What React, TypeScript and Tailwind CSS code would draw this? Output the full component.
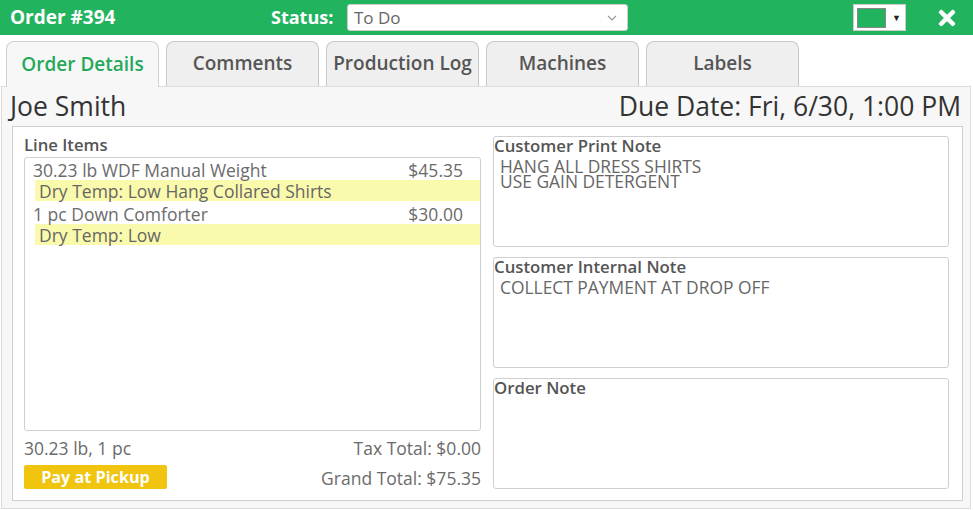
import React from "react";
import { FaTimes } from "react-icons/fa";

const tabs = ["Order Details", "Comments", "Production Log", "Machines", "Labels"];

function Note({ title, lines }: { title: string; lines: string[] }) {
  return (
    <div className="h-[111px] rounded-[3px] border border-[#cfcfcf] bg-white">
      <div className="text-[16.8px] font-semibold leading-[17px] text-[#555]">{title}</div>
      <div className="pl-[6px] pt-[5px] text-[17.4px] leading-[15px] text-[#666]">
        {lines.map((l) => (
          <div key={l}>{l}</div>
        ))}
      </div>
    </div>
  );
}

function Item({ name, price, note }: { name: string; price: string; note: string }) {
  return (
    <div className="mb-[3px]">
      <div className="flex h-[20px] items-center justify-between pl-[8px] pr-[17px] text-[17.5px] leading-[20px] text-[#6b6b6b]">
        <span>{name}</span>
        <span>{price}</span>
      </div>
      <div className="ml-[10px] flex h-[21px] items-center bg-[#fafaad] pl-[4px] text-[17.5px] leading-[20px] text-[#666]">{note}</div>
    </div>
  );
}

export default function App() {
  return (
    <div className="h-[510px] w-[973px] overflow-hidden bg-white" style={{ fontFamily: '"Open Sans", sans-serif' }}>
      {/* header */}
      <div className="flex h-[35px] items-center bg-[#22b35f] pl-[10px]">
        <div className="w-[261px] text-[19px] font-bold text-white">Order #394</div>
        <div className="w-[76px] text-[18px] font-bold text-white">Status:</div>
        <div className="flex h-[27px] w-[281px] items-center justify-between rounded-[3px] border border-[#ccc] bg-white pl-[6px] pr-[10px] text-[17px] text-[#666]">
          <span>To Do</span>
          <svg width="10" height="6" viewBox="0 0 10 6" fill="none">
            <path d="M1 1l4 4 4-4" stroke="#999" strokeWidth="1.2" />
          </svg>
        </div>
        <div className="ml-[225px] flex h-[27px] w-[53px] items-center border border-[#ccc] bg-white pl-[3px]">
          <div className="h-[20px] w-[29px] border border-[#888] bg-[#22b35f]" />
          <div className="ml-[6px] text-[9px] leading-none text-[#222]">▼</div>
        </div>
        <div className="ml-[29px] flex items-center text-white">
          <FaTimes size={24} />
        </div>
      </div>

      {/* tabs */}
      <div className="mt-[6px] flex h-[45px] gap-[7px] pl-[6px]">
        {tabs.map((t, i) => (
          <div
            key={t}
            className={
              i === 0
                ? "relative z-10 flex h-[46px] w-[153px] items-center justify-center rounded-t-[8px] border border-b-0 border-[#d0d0d0] bg-[#f7f7f7] pb-[1px] text-[19px] font-semibold text-[#25a85a]"
                : "flex h-[45px] w-[153px] items-center justify-center rounded-t-[8px] border border-b-0 border-[#c8c8c8] bg-[#efefef] pb-[1px] text-[19px] font-semibold text-[#555]"
            }
          >
            {t}
          </div>
        ))}
      </div>

      {/* panel */}
      <div className="ml-[1px] h-[423px] w-[970px] border border-[#dcdcdc] bg-[#f7f7f7]">
        <div className="flex h-[39px] items-center justify-between pl-[8px] pr-[9px] pt-[1px] text-[26.5px] text-[#333]">
          <span>Joe Smith</span>
          <span>Due Date: Fri, 6/30, 1:00 PM</span>
        </div>
        <div className="ml-[10px] h-[375px] w-[951px] border border-[#cfcfcf] bg-white">
          <div className="grid grid-cols-[457px_456px] gap-[12px] pb-[10px] pl-[11px] pt-[9px]">
            {/* left */}
            <div className="flex flex-col">
              <div className="h-[21px] text-[16.7px] font-semibold leading-[17px] text-[#555]">Line Items</div>
              <div className="h-[274px] rounded-[3px] border border-[#cfcfcf] bg-white pt-[2px]">
                <Item name="30.23 lb WDF Manual Weight" price="$45.35" note="Dry Temp: Low Hang Collared Shirts" />
                <Item name="1 pc Down Comforter" price="$30.00" note="Dry Temp: Low" />
              </div>
              <div className="mt-[7px] flex h-[20px] items-center justify-between text-[17.5px] leading-[20px] text-[#6b6b6b]">
                <span>30.23 lb, 1 pc</span>
                <span>Tax Total: $0.00</span>
              </div>
              <div className="mt-[7px] flex h-[24px] items-center justify-between">
                <div className="flex h-[24px] w-[143px] items-center justify-center rounded-[2px] bg-[#f1c40f] text-[16.2px] font-bold text-white">
                  Pay at Pickup
                </div>
                <span className="pt-[2px] text-[17.5px] leading-[20px] text-[#6b6b6b]">Grand Total: $75.35</span>
              </div>
            </div>
            {/* right */}
            <div className="flex flex-col gap-[10px]">
              <Note title="Customer Print Note" lines={["HANG ALL DRESS SHIRTS", "USE GAIN DETERGENT"]} />
              <Note title="Customer Internal Note" lines={["COLLECT PAYMENT AT DROP OFF"]} />
              <Note title="Order Note" lines={[]} />
            </div>
          </div>
        </div>
      </div>
    </div>
  );
}
